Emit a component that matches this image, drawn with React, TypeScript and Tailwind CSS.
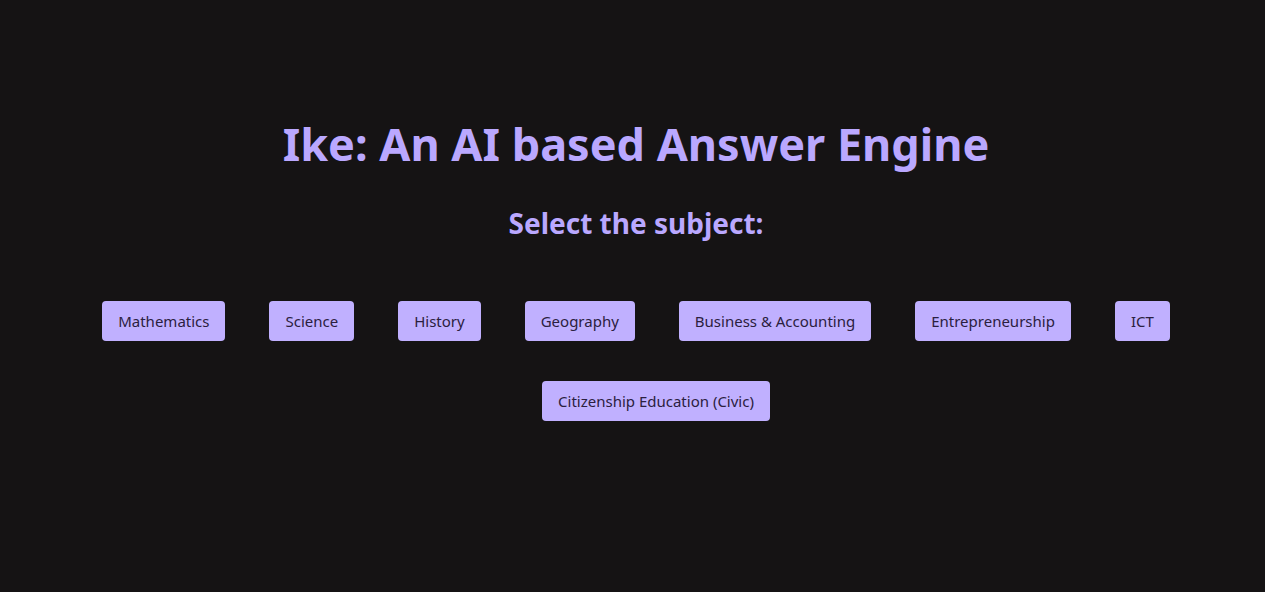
import React from 'react';

const subjects = [
  'Mathematics',
  'Science',
  'History',
  'Geography',
  'Business & Accounting',
  'Entrepreneurship',
  'ICT',
];

function SubjectButton({ label }: { label: string }) {
  return (
    <button className="h-10 px-4 rounded-[4px] bg-[#c0b0ff] text-[#2b2040] text-[15px] leading-5 cursor-pointer">
      {label}
    </button>
  );
}

export default function App() {
  return (
    <div
      className="min-h-[592px] w-full bg-[#151314] flex flex-col items-center pl-[7px]"
      style={{ fontFamily: '"Noto Sans", "Open Sans", sans-serif' }}
    >
      <h1 className="mt-[116px] text-[45px] leading-[56px] font-bold text-[#baa8ff]">
        Ike: An AI based Answer Engine
      </h1>
      <h2 className="mt-[33px] text-[28px] leading-[36px] font-bold text-[#baa8ff]">
        Select the subject:
      </h2>
      <div className="mt-[60px] flex justify-center gap-[44px]">
        {subjects.map(s => (
          <SubjectButton key={s} label={s} />
        ))}
      </div>
      <div className="mt-[40px] flex justify-center pl-[40px]">
        <SubjectButton label="Citizenship Education (Civic)" />
      </div>
    </div>
  );
}
